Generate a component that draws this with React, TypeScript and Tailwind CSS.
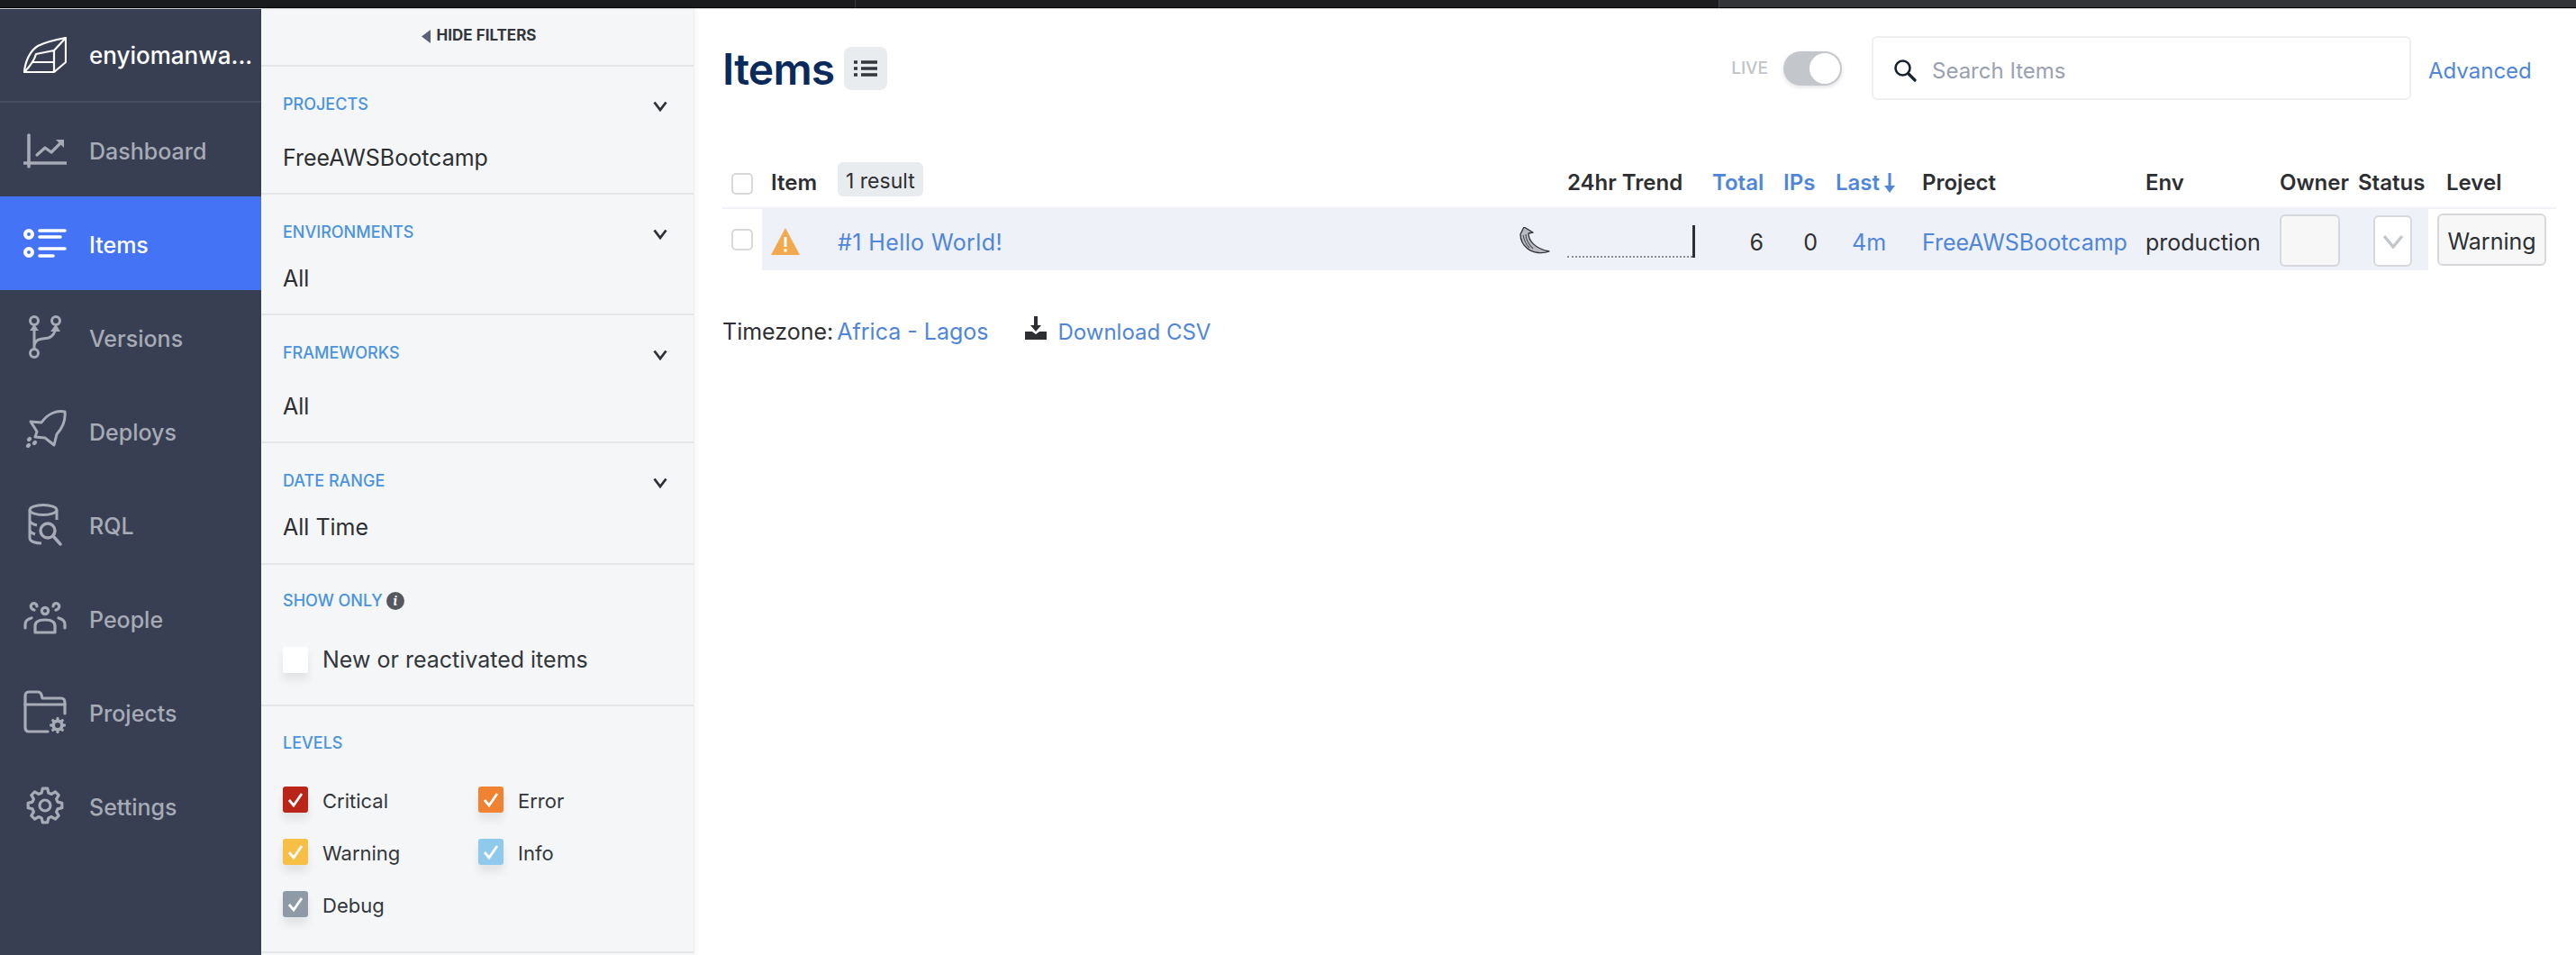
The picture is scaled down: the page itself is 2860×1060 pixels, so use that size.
const gearPath = (cx: number, cy: number, outer: number, inner: number, teeth: number) => {
  const step = (Math.PI * 2) / teeth
  const points: string[] = []
  for (let i = 0; i < teeth; i++) {
    const a = i * step - Math.PI / 2
    const corners: [number, number][] = [
      [inner, a - step * 0.34],
      [outer, a - step * 0.18],
      [outer, a + step * 0.18],
      [inner, a + step * 0.34],
    ]
    corners.forEach(([r, t]) => {
      points.push(`${(cx + r * Math.cos(t)).toFixed(2)} ${(cy + r * Math.sin(t)).toFixed(2)}`)
    })
  }
  return `M${points.join(' L')} Z`
}

const navItems = [
  { label: 'Dashboard', icon: <DashboardIcon /> },
  { label: 'Items', icon: <ItemsIcon />, active: true },
  { label: 'Versions', icon: <VersionsIcon /> },
  { label: 'Deploys', icon: <DeploysIcon /> },
  { label: 'RQL', icon: <RqlIcon /> },
  { label: 'People', icon: <PeopleIcon /> },
  { label: 'Projects', icon: <ProjectsIcon /> },
  { label: 'Settings', icon: <SettingsIcon /> },
]

function LogoIcon() {
  return (
    <svg width="48" height="40" viewBox="0 0 48 40" fill="none" stroke="currentColor" strokeWidth="2.2" strokeLinejoin="round">
      <path d="M1 39 C2 26 8 15 16 10 C24 6 36 3 47 1 V28 L34 39 Z" />
      <path d="M47 1 L34 15 V39 M34 15 L14 19 C12 26 7 33 1 39 M10 28 H34" />
    </svg>
  )
}

function DashboardIcon() {
  return (
    <svg width="48" height="48" viewBox="0 0 48 48" fill="none" stroke="currentColor" strokeWidth="3.6" strokeLinecap="round" strokeLinejoin="round">
      <path d="M6 8 V43 M1 39 H47" />
      <path d="M15 30 L24 22 L31 27 L43 15" strokeWidth="3.2" />
      <path d="M36 13 H45 V22 Z" fill="currentColor" stroke="none" />
    </svg>
  )
}

function ItemsIcon() {
  return (
    <svg width="48" height="48" viewBox="0 0 48 48" fill="none" stroke="currentColor">
      <circle cx="6" cy="14" r="4" strokeWidth="4" />
      <circle cx="6" cy="34" r="4" strokeWidth="4" />
      <path d="M18 10 H46 M18 17 H41 M18 30 H46 M18 38 H33" strokeWidth="3.6" strokeLinecap="round" />
    </svg>
  )
}

function VersionsIcon() {
  return (
    <svg width="48" height="48" viewBox="0 0 48 48" fill="none" stroke="currentColor" strokeWidth="3">
      <circle cx="12" cy="6" r="4.5" />
      <circle cx="36" cy="6" r="4.5" />
      <circle cx="12" cy="42" r="4.5" />
      <path d="M12 14 V37 M12 34 C13 25 22 26 28 25 C33 23 35 20 36 14" />
      <path d="M7 17 L12 10 L17 17 Z M30 18 L36 10 L41 18 Z" fill="currentColor" stroke="none" />
    </svg>
  )
}

function DeploysIcon() {
  return (
    <svg width="48" height="48" viewBox="0 0 48 48" fill="none" stroke="currentColor" strokeWidth="3" strokeLinejoin="round" strokeLinecap="round">
      <path d="M46 3 C37 1 27 5 20 15 L8 14 L15 25 L13 31 L24 32 L34 40 L37 28 C44 20 47 12 46 3 Z" />
      <path d="M7 33 L6 34 M13 37 L12 38 M6 40 L5 41" strokeWidth="4.4" />
    </svg>
  )
}

function RqlIcon() {
  return (
    <svg width="48" height="48" viewBox="0 0 48 48" fill="none" stroke="currentColor" strokeWidth="3">
      <ellipse cx="22" cy="8" rx="15" ry="5.5" />
      <path d="M7 8 V39 C7 43 13 45 20 45 M37 8 V19 M7 20 C8 23 11 24 15 25 M7 31 C8 33 10 34 13 35" />
      <circle cx="27" cy="31" r="8" strokeWidth="3.4" />
      <path d="M33 37 L41 46" strokeWidth="3.4" strokeLinecap="round" />
    </svg>
  )
}

function PeopleIcon() {
  return (
    <svg width="48" height="48" viewBox="0 0 48 48" fill="none" stroke="currentColor" strokeWidth="3.2" strokeLinecap="round" strokeLinejoin="round">
      <circle cx="24" cy="16" r="3.6" />
      <path d="M13 40 V33 C13 29 16 26 24 26 C32 26 35 29 35 33 V40 Z" />
      <path d="M12 15 C8 14 7 10 10 8 C12 7 15 8 15 11 M36 15 C40 14 41 10 38 8 C36 7 33 8 33 11" />
      <path d="M2 35 V31 C2 27 5 25 9 24 M46 35 V31 C46 27 43 25 39 24" />
    </svg>
  )
}

function ProjectsIcon() {
  return (
    <svg width="48" height="48" viewBox="0 0 48 48" fill="none" stroke="currentColor" strokeWidth="3.2" strokeLinejoin="round" strokeLinecap="round">
      <path d="M27 46 H6 C3 46 2 44 2 41 V7 C2 3 3 2 6 2 H16 C19 2 20 4 21 9 H42 C45 9 46 11 46 14 V26" />
      <path d="M2 16 H46" />
      <path d={gearPath(38, 39, 9, 6.6, 8)} fill="currentColor" stroke="none" />
      <circle cx="38" cy="39" r="3" fill="#383f53" stroke="none" />
    </svg>
  )
}

function SettingsIcon() {
  return (
    <svg width="48" height="48" viewBox="0 0 48 48" fill="none" stroke="currentColor" strokeWidth="3.2" strokeLinejoin="round">
      <path d={gearPath(24, 24, 19, 14.5, 8)} />
      <circle cx="24" cy="24" r="6" />
    </svg>
  )
}

function Chevron() {
  return (
    <svg width="16" height="12" viewBox="0 0 16 12" fill="none" stroke="#2e3138" strokeWidth="2.8" className="absolute right-[29px] top-[38px]">
      <path d="M1.5 1.5 L8 10 L14.5 1.5" />
    </svg>
  )
}

function FilterCheckbox({ color, label }: { color: string; label: string }) {
  return (
    <div className="flex h-[58px] w-[217px] items-start">
      <span className={`flex h-[29px] w-[28px] items-center justify-center rounded-[3px] shadow-[0_8px_10px_rgba(0,0,0,0.08)] ${color}`}>
        <svg width="18" height="17" viewBox="0 0 18 17" fill="none" stroke="white" strokeWidth="2.8">
          <path d="M2 9 L7 15 L16 2" />
        </svg>
      </span>
      <span className="ml-[16px] text-[22px] leading-[32px] text-[#33363b]">{label}</span>
    </div>
  )
}

function Column({ width, className, children }: { width: string; className?: string; children?: React.ReactNode }) {
  return <div className={`shrink-0 whitespace-nowrap ${width} ${className ?? ''}`}>{children}</div>
}

function RowCheckbox() {
  return <span className="ml-[10px] block h-[24px] w-[24px] rounded-[5px] border-2 border-[#d8d9db] bg-white" />
}

export default function App() {
  return (
    <div className="h-screen w-[2860px] overflow-hidden bg-white font-[Inter,sans-serif] text-[#2d2f33]">
      {/* browser strip at the top */}
      <div className="flex h-[10px] border-b border-b-[#c9cacb]">
        <div className="h-[9px] w-[949px] border-b border-black bg-[#1a1b1d]" />
        <div className="h-[9px] w-[959px] border-b border-l border-black border-l-[#3a3b3d] bg-[#1c1d1f]" />
        <div className="h-[9px] flex-1 border-b border-l border-black border-l-[#48494b] bg-[#333437]" />
      </div>

      <div className="flex h-[1050px]">
        {/* Sidebar */}
        <aside className="w-[290px] shrink-0 bg-[#383f53] text-[#a7abb6]">
          <div className="flex h-[104px] items-center border-b-2 border-[#474d60] pl-[26px] text-white">
            <LogoIcon />
            <span className="ml-[25px] text-[26px] font-medium">enyiomanwa...</span>
          </div>
          {navItems.map((item) => (
            <div
              key={item.label}
              className={`flex h-[104px] items-center pl-[26px] ${item.active ? 'bg-[#4474f5] text-white' : ''}`}
            >
              <span className="flex h-[48px] w-[48px] items-center justify-center">{item.icon}</span>
              <span className="ml-[25px] pt-[5px] text-[25px] font-medium">{item.label}</span>
            </div>
          ))}
        </aside>

        {/* Filters */}
        <section className="w-[481px] shrink-0 border-r border-[#eeeff1] bg-[#f5f6f8] shadow-[2px_0_6px_rgba(0,0,0,0.04)]">
          <div className="flex h-[64px] items-center justify-center gap-[7px] border-b-2 border-[#e4e6e9] pl-[3px] pb-[2px] text-[17px] font-bold text-[#33363d]">
            <svg width="10" height="15" viewBox="0 0 10 15" fill="#5b6174">
              <path d="M10 0 V15 L0 7.5 Z" />
            </svg>
            HIDE FILTERS
          </div>

          <div className="relative h-[142px] border-b-2 border-[#e4e6e9] pl-[24px] pt-[30px]">
            <div className="text-[18px] leading-[24px] font-medium text-[#4a93de]">PROJECTS</div>
            <Chevron />
            <div className="mt-[32px] text-[25px] leading-[30px]">FreeAWSBootcamp</div>
          </div>
          <div className="relative h-[134px] border-b-2 border-[#e4e6e9] pl-[24px] pt-[30px]">
            <div className="text-[18px] leading-[24px] font-medium text-[#4a93de]">ENVIRONMENTS</div>
            <Chevron />
            <div className="mt-[24px] text-[25px] leading-[30px]">All</div>
          </div>
          <div className="relative h-[142px] border-b-2 border-[#e4e6e9] pl-[24px] pt-[30px]">
            <div className="text-[18px] leading-[24px] font-medium text-[#4a93de]">FRAMEWORKS</div>
            <Chevron />
            <div className="mt-[32px] text-[25px] leading-[30px]">All</div>
          </div>
          <div className="relative h-[135px] border-b-2 border-[#e4e6e9] pl-[24px] pt-[30px]">
            <div className="text-[18px] leading-[24px] font-medium text-[#4a93de]">DATE RANGE</div>
            <Chevron />
            <div className="mt-[24px] text-[25px] leading-[30px]">All Time</div>
          </div>
          <div className="h-[157px] border-b-2 border-[#e4e6e9] pl-[24px] pt-[28px]">
            <div className="flex items-center gap-[4px] text-[18px] leading-[24px] font-medium text-[#4a93de]">
              SHOW ONLY
              <span className="flex h-[20px] w-[20px] items-center justify-center rounded-full bg-[#55585e] font-serif text-[15px] font-bold italic text-white">i</span>
            </div>
            <div className="mt-[35px] flex items-center">
              <span className="h-[29px] w-[28px] rounded-[3px] bg-white shadow-[0_8px_10px_rgba(0,0,0,0.08)]" />
              <span className="ml-[16px] text-[25px] text-[#33363b]">New or reactivated items</span>
            </div>
          </div>
          <div className="h-[274px] border-b-2 border-[#e4e6e9] pl-[24px] pt-[29px]">
            <div className="text-[18px] leading-[24px] font-medium text-[#4a93de]">LEVELS</div>
            <div className="mt-[36px] flex flex-wrap">
              <FilterCheckbox color="bg-[#bb2418]" label="Critical" />
              <FilterCheckbox color="bg-[#f08232]" label="Error" />
              <FilterCheckbox color="bg-[#f7bf45]" label="Warning" />
              <FilterCheckbox color="bg-[#8fcaec]" label="Info" />
              <FilterCheckbox color="bg-[#8e9aa5]" label="Debug" />
            </div>
          </div>
        </section>

        {/* Items list */}
        <main className="min-w-0 flex-1 pt-[30px] pl-[31px]">
          <div className="flex h-[71px] items-center pr-[48px]">
            <h1 className="pt-[2px] text-[48px] leading-none font-semibold tracking-[-0.8px] text-[#0b2a5c]">Items</h1>
            <button className="ml-[11px] flex h-[48px] w-[48px] items-center justify-center rounded-[8px] bg-[#e9ecef]">
              <svg width="26" height="20" viewBox="0 0 26 20" stroke="#33363d" strokeWidth="3.4" fill="none">
                <path d="M0 3 H4 M8 3 H26 M0 10 H4 M8 10 H26 M0 17 H4 M8 17 H26" />
              </svg>
            </button>
            <div className="flex-1" />
            <span className="pt-[2px] text-[19px] font-medium text-[#c0c3c8]">LIVE</span>
            <span className="ml-[17px] flex h-[38px] w-[65px] items-center justify-end rounded-full bg-[#c3c7cc] p-[2px] shadow-[0_2px_5px_rgba(0,0,0,0.12)]">
              <span className="h-[34px] w-[34px] rounded-full bg-white" />
            </span>
            <div className="ml-[33px] flex h-[71px] w-[599px] items-center rounded-[6px] border-2 border-[#eeeff1] pl-[22px]">
              <svg width="26" height="26" viewBox="0 0 26 26" fill="none" stroke="#19232f" strokeWidth="2.6" strokeLinecap="round" className="mt-[4px]">
                <circle cx="10.5" cy="10.5" r="8" />
                <path d="M17 17 L24 24" strokeWidth="3.2" />
              </svg>
              <span className="ml-[17px] pt-[6px] text-[24px] text-[#9aa1b0]">Search Items</span>
            </div>
            <a className="ml-[19px] w-[116px] whitespace-nowrap pt-[6px] text-[24px] text-[#4f86d9]">Advanced</a>
          </div>

          {/* table header */}
          <div className="mt-[69px] flex h-[50px] items-start pr-[22px] text-[24px] font-semibold">
            <Column width="w-[44px]" className="pt-[12px]">
              <RowCheckbox />
            </Column>
            <Column width="w-[84px]" className="pl-[10px] pt-[5px]">Item</Column>
            <Column width="w-[810px]">
              <span className="inline-block h-[38px] rounded-[6px] bg-[#e9ecef] px-[9px] text-[23px] leading-[42px] font-normal">1 result</span>
            </Column>
            <Column width="w-[161px]" className="pt-[5px]">24hr Trend</Column>
            <Column width="w-[79px]" className="pt-[5px] text-[#4f86d9]">Total</Column>
            <Column width="w-[58px]" className="pt-[5px] text-[#4f86d9]">IPs</Column>
            <Column width="w-[96px]" className="flex items-center gap-[4px] pt-[5px] text-[#4f86d9]">
              Last
              <svg width="14" height="22" viewBox="0 0 14 22" fill="#4f86d9">
                <path d="M5.5 0 H8.5 V14 H13 L7 22 L1 14 H5.5 Z" />
              </svg>
            </Column>
            <Column width="w-[248px]" className="pt-[5px]">Project</Column>
            <Column width="w-[149px]" className="pt-[5px]">Env</Column>
            <Column width="w-[87px]" className="pt-[5px]">Owner</Column>
            <Column width="w-[98px]" className="pt-[5px]">Status</Column>
            <Column width="w-[80px]" className="pt-[5px]">Level</Column>
          </div>

          {/* the single row */}
          <div className="mr-[22px] flex h-[70px] items-center border-t-2 border-[#eff1f4] text-[25px]">
            <Column width="w-[44px]">
              <RowCheckbox />
            </Column>
            <div className="flex h-[68px] w-[1850px] items-center bg-[#eef1f8] pt-[7px]">
              <Column width="w-[84px]" className="-mt-[3px] pl-[10px]">
                <svg width="32" height="30" viewBox="0 0 32 30" className="block">
                  <path d="M16 0 L32 30 H0 Z" fill="#f2a94e" />
                  <path d="M14.5 10 H17.5 V21 H14.5 Z M14.5 23.5 H17.5 V26.5 H14.5 Z" fill="white" />
                </svg>
              </Column>
              <Column width="w-[757px]" className="tracking-[0.4px] text-[#4f86d9]">#1 Hello World!</Column>
              <Column width="w-[53px]" className="-mt-[3px]">
                <svg width="34" height="32" viewBox="0 0 34 32" fill="none" className="block">
                  <path d="M5 0 L15 6 L10 7 C10 15 17 24 33 27 C26 30 15 29 9 24 C4 20 1 14 1 8 Z" fill="#b9bbc0" stroke="#2f3136" strokeWidth="1.3" strokeLinejoin="round" />
                  <path d="M4 9 C5 14 7 19 11 23 M7 8 C7 14 10 19 15 24" stroke="#4a4c52" strokeWidth="1.1" />
                </svg>
              </Column>
              <Column width="w-[161px]" className="-mt-[3px] flex h-[36px] items-end">
                <span className="w-[139px] border-b-2 border-dotted border-[#8b8e94]" />
                <span className="h-[36px] w-[3px] bg-[#2d2f33]" />
              </Column>
              <Column width="w-[57px]" className="text-right">6</Column>
              <Column width="w-[60px]" className="text-right">0</Column>
              <Column width="w-[116px]" className="pl-[38px] text-[#4f86d9]">4m</Column>
              <Column width="w-[248px]" className="text-[#4f86d9]">FreeAWSBootcamp</Column>
              <Column width="w-[149px]">production</Column>
              <Column width="w-[104px]" className="-translate-y-[3px]">
                <span className="block h-[58px] w-[67px] rounded-[6px] border-2 border-[#d6d8db] bg-[#f7f7f8]" />
              </Column>
              <Column width="w-[43px]" className="-translate-y-[2px]">
                <span className="flex h-[57px] w-[43px] items-center justify-center rounded-[6px] border-2 border-[#d6d8db] bg-white">
                  <svg width="24" height="16" viewBox="0 0 24 16" fill="none" stroke="#c3c7cc" strokeWidth="3.4">
                    <path d="M2 2 L12 14 L22 2" />
                  </svg>
                </span>
              </Column>
            </div>
            <div className="ml-[10px] flex h-[58px] w-[121px] items-center justify-center rounded-[6px] border-2 border-[#d6d8db] bg-[#f7f7f8] pt-[5px]">
              Warning
            </div>
          </div>

          <div className="mt-[50px] flex items-center text-[25px]">
            <span>Timezone:</span>
            <a className="ml-[4px] text-[#4f86d9]">Africa - Lagos</a>
            <svg width="24" height="26" viewBox="0 0 24 26" fill="#2d2f33" className="ml-[41px] -mt-[9px]">
              <path d="M10 0 H14 V10 H18 L12 17 L6 10 H10 Z" />
              <path d="M0 17 H8 L12 20 L16 17 H24 V26 H0 Z" />
            </svg>
            <a className="ml-[12px] text-[24px] text-[#4f86d9]">Download CSV</a>
          </div>
        </main>
      </div>
    </div>
  )
}
